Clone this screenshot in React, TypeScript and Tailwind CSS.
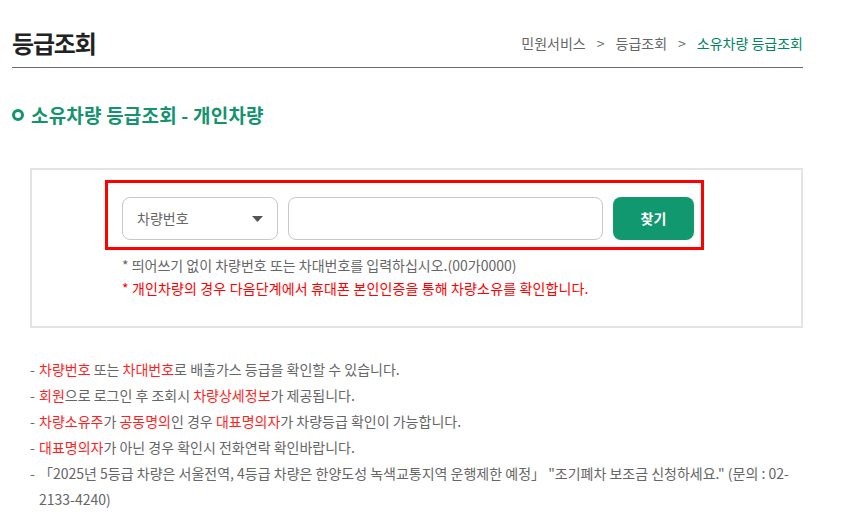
import React from 'react';

const font = { fontFamily: '"Noto Sans CJK KR", "Noto Sans", sans-serif' };

const Hl: React.FC<{ children: React.ReactNode }> = ({ children }) => (
  <span className="text-[#ff1f1f]">{children}</span>
);

const notes: React.ReactNode[] = [
  <>
    <Hl>차량번호</Hl> 또는 <Hl>차대번호</Hl>로 배출가스 등급을 확인할 수 있습니다.
  </>,
  <>
    <Hl>회원</Hl>으로 로그인 후 조회시 <Hl>차량상세정보</Hl>가 제공됩니다.
  </>,
  <>
    <Hl>차량소유주</Hl>가 <Hl>공동명의</Hl>인 경우 <Hl>대표명의자</Hl>가 차량등급 확인이 가능합니다.
  </>,
  <>
    <Hl>대표명의자</Hl>가 아닌 경우 확인시 전화연락 확인바랍니다.
  </>,
  <>
    「2025년 5등급 차량은 서울전역, 4등급 차량은 한양도성 녹색교통지역 운행제한 예정」 "조기폐차 보조금 신청하세요." (문의 : 02-2133-4240)
  </>,
];

const App: React.FC = () => {
  return (
    <div className="min-h-screen bg-white w-[842px]" style={font}>
      <div className="w-[791px] ml-3">
        {/* 페이지 헤더 */}
        <div className="flex items-end justify-between h-[68px] border-b border-[#6b6b6b] pb-[12px]">
          <h1 className="text-[24px] font-bold text-[#222] leading-none tracking-[-0.05em]">등급조회</h1>
          <div className="flex items-center text-[14px] text-[#666] leading-none pb-[5px]">
            <span>민원서비스</span>
            <span className="mx-[11px]">&gt;</span>
            <span>등급조회</span>
            <span className="mx-[11px]">&gt;</span>
            <span className="text-[#00855f]">소유차량 등급조회</span>
          </div>
        </div>

        <h2 className="flex items-center gap-[7px] mt-[37px] text-[19px] font-bold text-[#14936e] leading-none tracking-[0.01em]">
          <span className="w-[12px] h-[12px] rounded-full border-[3px] border-[#14936e]" />
          소유차량 등급조회 - 개인차량
        </h2>
      </div>

      {/* 검색 박스 */}
      <div className="ml-[30px] mt-[44px] w-[773px] h-[160px] border-2 border-[#e3e3e3] pt-[10px]">
        <div className="ml-[73px] w-[599px] h-[70px] border-[3px] border-[#ff0000] flex items-start gap-[10px] pl-[14px] pt-[14px]">
          <div className="w-[156px] h-[43px] rounded-[8px] border border-[#c8c8c8] flex items-center justify-between pl-[14px] pr-[14px]">
            <span className="text-[14px] text-[#666]">차량번호</span>
            <svg width="11" height="6" viewBox="0 0 11 6">
              <path d="M0 0h11L5.5 6z" fill="#555" />
            </svg>
          </div>
          <div className="w-[315px] h-[43px] rounded-[8px] border border-[#c8c8c8]" />
          <button className="w-[81px] h-[43px] rounded-[8px] bg-[#12986e] text-white text-[14px] font-bold">
            찾기
          </button>
        </div>
        <div className="ml-[90px] mt-[4px] text-[14px] leading-[23px]">
          <p className="text-[#666]">* 띄어쓰기 없이 차량번호 또는 차대번호를 입력하십시오.(00가0000)</p>
          <p className="text-[#ff0000] tracking-[0.01em]">* 개인차량의 경우 다음단계에서 휴대폰 본인인증을 통해 차량소유를 확인합니다.</p>
        </div>
      </div>

      {/* 안내 목록 */}
      <ul className="ml-[30px] mt-[28px] w-[760px] text-[14px] leading-[26px] text-[#666]">
        {notes.map((n, i) => (
          <li key={i} className="flex">
            <span className="w-[9px] shrink-0">-</span>
            <span>{n}</span>
          </li>
        ))}
      </ul>
    </div>
  );
};

export default App;
